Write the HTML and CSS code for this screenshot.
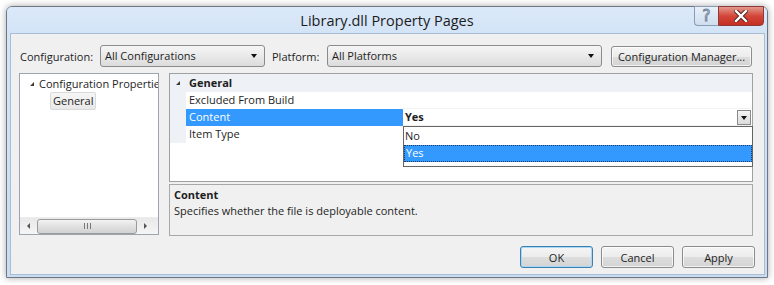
FILE: index.html
```html
<!DOCTYPE html>
<html lang="en">
<head>
    <meta charset="UTF-8">
    <title>Library.dll Property Pages</title>
    <link rel="stylesheet" href="styles.css">
</head>
<body>
    <div class="window">
        <div class="titlebar">
            <span class="title">Library.dll Property Pages</span>
            <div class="caption-buttons">
                <span class="cap-help">?</span>
                <span class="cap-close">
                    <svg width="14" height="12" viewBox="0 0 14 12">
                        <path d="M2 1 L12 11 M12 1 L2 11" stroke="#4a2020" stroke-width="4.2" stroke-linecap="square"/>
                        <path d="M2 1 L12 11 M12 1 L2 11" stroke="#fff" stroke-width="2.4" stroke-linecap="square"/>
                    </svg>
                </span>
            </div>
        </div>
        <div class="client">
            <div class="toolbar">
                <label class="lbl lbl-config">Configuration:</label>
                <div class="combo combo-config">All Configurations<span class="arrow"></span></div>
                <label class="lbl lbl-platform">Platform:</label>
                <div class="combo combo-platform">All Platforms<span class="arrow"></span></div>
                <button class="btn btn-manager">Configuration Manager...</button>
            </div>

            <div class="main">
                <div class="tree">
                    <div class="tree-items">
                        <div class="tree-node"><span class="expander"></span>Configuration Properties</div>
                        <div class="tree-child"><span class="tree-sel">General</span></div>
                    </div>
                    <div class="hscroll">
                        <span class="sarrow sarrow-left"></span>
                        <span class="thumb"><span class="grip"></span></span>
                        <span class="sarrow sarrow-right"></span>
                    </div>
                </div>

                <div class="right">
                    <div class="grid">
                        <div class="grid-row category"><span class="margin-cell"><span class="expander"></span></span><span class="name-cell">General</span></div>
                        <div class="grid-row"><span class="margin-cell"></span><span class="name-cell">Excluded From Build</span><span class="value-cell"></span></div>
                        <div class="grid-row selected"><span class="margin-cell"></span><span class="name-cell">Content</span><span class="value-cell"><b>Yes</b><span class="drop-btn"><span class="arrow"></span></span></span></div>
                        <div class="grid-row"><span class="margin-cell"></span><span class="name-cell">Item Type</span><span class="value-cell"></span></div>
                        <div class="grid-fill"></div>
                        <div class="dropdown">
                            <div class="opt">No</div>
                            <div class="opt opt-active">Yes</div>
                        </div>
                    </div>
                    <div class="desc">
                        <div class="desc-title">Content</div>
                        <div class="desc-text">Specifies whether the file is deployable content.</div>
                    </div>
                </div>
            </div>

            <div class="footer">
                <button class="btn btn-default">OK</button>
                <button class="btn">Cancel</button>
                <button class="btn">Apply</button>
            </div>
        </div>
    </div>
</body>
</html>
```

FILE: styles.css
```css
* { margin: 0; padding: 0; box-sizing: border-box; }
body {
    background: #ffffff;
    font-family: "Open Sans", "Noto Sans", sans-serif;
    font-size: 11px;
    color: #1e1e1e;
}
.window {
    position: relative;
    width: 762px;
    height: 272px;
    margin: 6px;
    border: 1px solid #6e7784;
    border-radius: 6px 6px 0 0;
    background: linear-gradient(#d6e6f8, #c9dcf1);
    box-shadow: 0 0 7px rgba(0, 0, 0, 0.35);
}
.titlebar {
    height: 26px;
    display: flex;
    align-items: center;
    justify-content: center;
    background: linear-gradient(#dbe9f9, #d3e4f7);
    border-radius: 5px 5px 0 0;
}
.title { font-size: 14.5px; color: #1c1c1c; padding-top: 1px; }
.caption-buttons {
    position: absolute;
    top: -1px;
    right: 3px;
    display: flex;
}
.cap-help {
    width: 24px;
    height: 20px;
    border: 1px solid #8a9bb3;
    border-right: none;
    border-radius: 0 0 0 4px;
    background: linear-gradient(#e8f0fa, #cfdeef);
    text-align: center;
    font: 15px/18px "DejaVu Sans", sans-serif;
    color: #ffffff;
    -webkit-text-stroke: 1px #74839a;
}
.cap-close {
    width: 46px;
    height: 20px;
    border: 1px solid #8c3a3a;
    border-radius: 0 0 4px 0;
    background: linear-gradient(#e39a8c, #d4463a 50%, #c42f22);
    display: flex;
    align-items: center;
    justify-content: center;
}

.client {
    margin: 0 2px 2px 3px;
    height: 242px;
    border: 1px solid #a9bdd5;
    background: #f0f0f0;
    padding: 11px 0 0 8px;
}
.toolbar { display: flex; align-items: center; height: 22px; }
.lbl { margin-left: 1px; }
.lbl-config { width: 80px; }
.lbl-platform { width: 55px; margin-left: 7px; }
.combo {
    position: relative;
    height: 22px;
    line-height: 19px;
    padding-left: 4px;
    border: 1px solid #8c8c8c;
    border-radius: 3px;
    background: linear-gradient(#f6f6f6, #e9e9e9 50%, #dcdcdc);
}
.combo-config { width: 165px; }
.combo-platform { width: 275px; }
.arrow {
    position: absolute;
    right: 7px;
    top: 8px;
    border-left: 3.5px solid transparent;
    border-right: 3.5px solid transparent;
    border-top: 4px solid #111;
}
.btn {
    font: inherit;
    color: #1e1e1e;
    height: 22px;
    border: 1px solid #8c8c8c;
    border-radius: 3px;
    background: linear-gradient(#f5f5f5, #ececec 50%, #dddddd 51%, #d4d4d4);
    box-shadow: inset 0 0 0 1px rgba(255, 255, 255, 0.7);
}
.btn-manager { width: 141px; margin-left: 9px; height: 21px; }

.main { display: flex; margin-top: 6px; height: 163px; }
.tree {
    width: 140px;
    height: 162px;
    border: 1px solid #9ea4ab;
    background: #fff;
    display: flex;
    flex-direction: column;
    overflow: hidden;
}
.tree-items { flex: 1; padding-top: 1px; }
.tree-node { white-space: nowrap; height: 17px; line-height: 17px; padding-left: 10px; display: flex; align-items: center; }
.expander {
    display: inline-block;
    width: 0;
    height: 0;
    border-left: 4px solid transparent;
    border-bottom: 4px solid #3c3c3c;
    margin-right: 5px;
}
.tree-child { padding-left: 30px; height: 18px; }
.tree-sel {
    display: inline-block;
    height: 18px;
    line-height: 16px;
    padding: 0 2px;
    border: 1px solid #d9d9d9;
    border-radius: 2px;
    background: linear-gradient(#f6f6f6, #e8e8e8);
}
.hscroll {
    position: relative;
    height: 17px;
    background: linear-gradient(#e9e9e9, #f5f5f5);
    border-top: 1px solid #ececec;
    display: flex;
    align-items: center;
}
.sarrow { width: 17px; display: flex; justify-content: center; }
.sarrow-left::before, .sarrow-right::before {
    content: "";
    border-top: 3px solid transparent;
    border-bottom: 3px solid transparent;
}
.sarrow-left::before { border-right: 3px solid #555; }
.sarrow-right::before { border-left: 3px solid #555; }
.thumb {
    width: 100px;
    height: 15px;
    border: 1px solid #9a9a9a;
    border-radius: 3px;
    background: linear-gradient(#f3f3f3, #e0e0e0 50%, #d2d2d2);
    display: flex;
    justify-content: center;
    align-items: center;
}
.grip {
    width: 7px;
    height: 6px;
    border-left: 1px solid #777;
    border-right: 1px solid #777;
    position: relative;
}
.grip::after {
    content: "";
    position: absolute;
    left: 2px;
    top: 0;
    width: 1px;
    height: 6px;
    background: #777;
}

.right { margin-left: 10px; width: 584px; display: flex; flex-direction: column; }
.grid {
    position: relative;
    height: 109px;
    border: 1px solid #a0a0a0;
    background: #fff;
}
.grid-row { display: flex; height: 17px; line-height: 16px; }
.grid-row.category { height: 18px; background: #eef1f6; font-weight: bold; line-height: 17px; }
.margin-cell { width: 16px; background: #eef1f6; display: flex; align-items: center; justify-content: center; }
.margin-cell .expander { margin: 0; }
.name-cell { width: 217px; padding-left: 3px; white-space: nowrap; }
.value-cell { flex: 1; position: relative; padding-left: 2px; border-bottom: 1px solid #f2f2f2; }
.grid-row.selected .name-cell { background: #3399ff; color: #fff; }
.drop-btn {
    position: absolute;
    right: 1px;
    top: 1px;
    width: 14px;
    height: 15px;
    border: 1px solid #8a8a8a;
    background: linear-gradient(#f4f4f4, #dcdcdc);
}
.drop-btn .arrow { right: 3px; top: 5px; }
.dropdown {
    position: absolute;
    left: 233px;
    top: 52px;
    width: 350px;
    height: 41px;
    border: 1px solid #646464;
    background: #fff;
    padding-top: 1px;
}
.opt { height: 17px; line-height: 16px; padding-left: 1px; }
.opt-active { background: #3399ff; color: #fff; border: 1px dotted #1a3a66; line-height: 14px; }

.desc {
    margin-top: 2px;
    height: 52px;
    border: 1px solid #a8a8a8;
    background: #f0f0f0;
    padding: 2px 4px;
}
.desc-title { font-weight: bold; line-height: 16px; }
.desc-text { line-height: 16px; }

.footer { display: flex; justify-content: flex-end; gap: 8px; margin-top: 10px; padding-right: 9px; }
.footer .btn { width: 73px; }
.btn-default { border-color: #3c7fb1; box-shadow: inset 0 0 0 1px #a7d9f5; }
```
